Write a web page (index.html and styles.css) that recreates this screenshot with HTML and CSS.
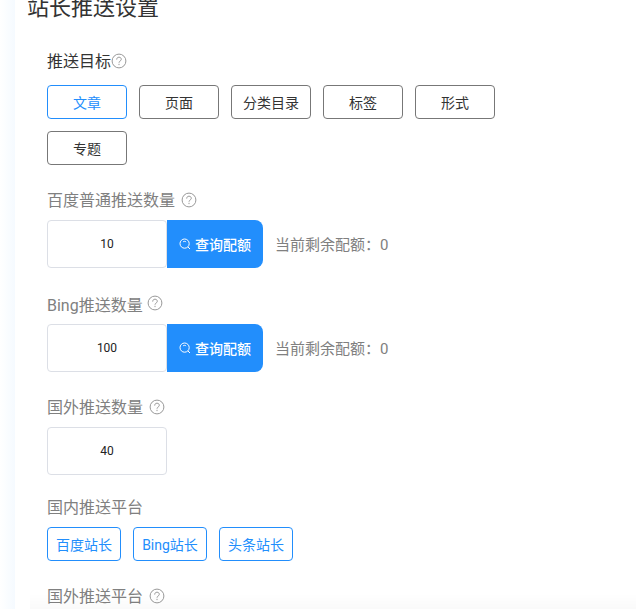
FILE: index.html
```html
<!DOCTYPE html>
<html lang="zh-CN">
<head>
  <meta charset="UTF-8">
  <meta name="viewport" content="width=device-width,initial-scale=1">
  <title>站长推送设置</title>
  <link rel="stylesheet" href="styles.css">
</head>
<body>

  <!-- shared icons -->
  <svg class="sprite" aria-hidden="true">
    <symbol id="icon-help" viewBox="0 0 16 16">
      <circle cx="8" cy="8" r="6.9"/>
      <path d="M5.7 6.6C5.7 5.1 6.6 4.2 8 4.2s2.3.9 2.3 2.1c0 1.7-2.3 1.7-2.3 3.4M8 10.8v1.3"/>
    </symbol>
    <symbol id="icon-search" viewBox="0 0 12 12">
      <circle cx="5.6" cy="5.6" r="4.6"/>
      <path d="M9 9l2 2M4 4c.9-.9 2.2-.9 3.1 0"/>
    </symbol>
  </svg>

  <main class="panel">
    <h1 class="panel-title">站长推送设置</h1>

    <form class="settings">
      <!-- push targets -->
      <fieldset class="group">
        <legend class="group-label group-label-dark">推送目标<svg class="help"><use href="#icon-help"/></svg></legend>
        <div class="choices choices-target">
          <label class="choice"><input type="checkbox" name="target" value="post" checked><span>文章</span></label>
          <label class="choice"><input type="checkbox" name="target" value="page"><span>页面</span></label>
          <label class="choice"><input type="checkbox" name="target" value="category"><span>分类目录</span></label>
          <label class="choice"><input type="checkbox" name="target" value="tag"><span>标签</span></label>
          <label class="choice"><input type="checkbox" name="target" value="format"><span>形式</span></label>
          <label class="choice"><input type="checkbox" name="target" value="topic"><span>专题</span></label>
        </div>
      </fieldset>

      <!-- quantities -->
      <div class="group">
        <label class="group-label spaced" for="baiduCount">百度普通推送数量<svg class="help"><use href="#icon-help"/></svg></label>
        <div class="quota">
          <input class="count" id="baiduCount" type="text" inputmode="numeric" value="10">
          <button class="query" type="button"><svg class="search"><use href="#icon-search"/></svg>查询配额</button>
          <span class="remain">当前剩余配额：0</span>
        </div>
      </div>

      <div class="group">
        <label class="group-label raised" for="bingCount">Bing推送数量<svg class="help"><use href="#icon-help"/></svg></label>
        <div class="quota">
          <input class="count" id="bingCount" type="text" inputmode="numeric" value="100">
          <button class="query" type="button"><svg class="search"><use href="#icon-search"/></svg>查询配额</button>
          <span class="remain">当前剩余配额：0</span>
        </div>
      </div>

      <div class="group">
        <label class="group-label spaced" for="foreignCount">国外推送数量<svg class="help"><use href="#icon-help"/></svg></label>
        <div class="quota">
          <input class="count" id="foreignCount" type="text" inputmode="numeric" value="40">
        </div>
      </div>

      <!-- platforms -->
      <fieldset class="group group-platform">
        <legend class="group-label">国内推送平台</legend>
        <div class="choices">
          <label class="choice"><input type="checkbox" name="platform" value="baidu" checked><span>百度站长</span></label>
          <label class="choice"><input type="checkbox" name="platform" value="bing" checked><span>Bing站长</span></label>
          <label class="choice"><input type="checkbox" name="platform" value="toutiao" checked><span>头条站长</span></label>
        </div>
      </fieldset>

      <fieldset class="group">
        <legend class="group-label spaced">国外推送平台<svg class="help"><use href="#icon-help"/></svg></legend>
      </fieldset>
    </form>
  </main>

</body>
</html>
```

FILE: styles.css
```css
*{box-sizing:border-box;margin:0;padding:0}
html{overflow:hidden}
body{font-family:Roboto,"Noto Sans CJK SC",sans-serif;color:#333;min-height:100vh;
     padding-left:15px;background:#fff linear-gradient(to right,#fff,#f5faff) no-repeat 0 0/15px 100%}
.sprite{display:none}
svg{fill:none;stroke:currentColor;flex:none}

.panel{background:#fff;padding:0 60px 0 12px}
.panel-title{font-size:22px;font-weight:400;line-height:32px;margin-top:-8px}
.settings{padding:25px 0 0 20px}

/* groups */
.group{border:none;margin-bottom:23px}
.group-platform{margin-top:-3px}
.group-label{display:flex;align-items:center;height:24px;font-size:16px;line-height:24px;
             color:#808080;padding-top:2px;margin-bottom:8px}
.group-label-dark{color:#333;margin-bottom:12px}
.help{width:16px;height:16px;color:#999;margin-bottom:2px}
.spaced{gap:6px}
/* icon sits above the text line here */
.raised{gap:4px;height:25px;padding-top:4px}
.raised .help{margin-bottom:6px}

/* tick boxes drawn as buttons */
.choices{display:flex;flex-wrap:wrap;gap:12px}
.choice{position:relative;cursor:pointer}
.choice input{position:absolute;opacity:0}
.choice span{display:block;min-width:74px;height:34px;line-height:34px;font-size:14px;
             text-align:center;border:1px solid #777;border-radius:4px}
.choices-target span{min-width:80px}
.choice input:checked + span{color:#228efc;border-color:#228efc}

/* number + query button */
.quota{display:flex;align-items:center}
.count{width:120px;height:48px;font:12px Roboto,"Noto Sans CJK SC",sans-serif;color:#222;
       text-align:center;border:1px solid #dcdfe6;border-radius:4px}
.query{display:flex;align-items:center;justify-content:center;gap:4px;width:96px;height:48px;
       font:500 14px "Noto Sans CJK SC",sans-serif;color:#fff;background:#228efc;border:none;
       border-radius:0 8px 8px 0;cursor:pointer}
.search{width:12px;height:12px}
.remain{font-size:15px;line-height:24px;color:#808080;margin-left:12px;padding-top:2px}

/* shade above the bottom bar */
body::after{content:"";position:fixed;left:30px;right:0;bottom:0;height:16px;
            background:linear-gradient(transparent,rgba(0,0,0,.02));pointer-events:none}
```
